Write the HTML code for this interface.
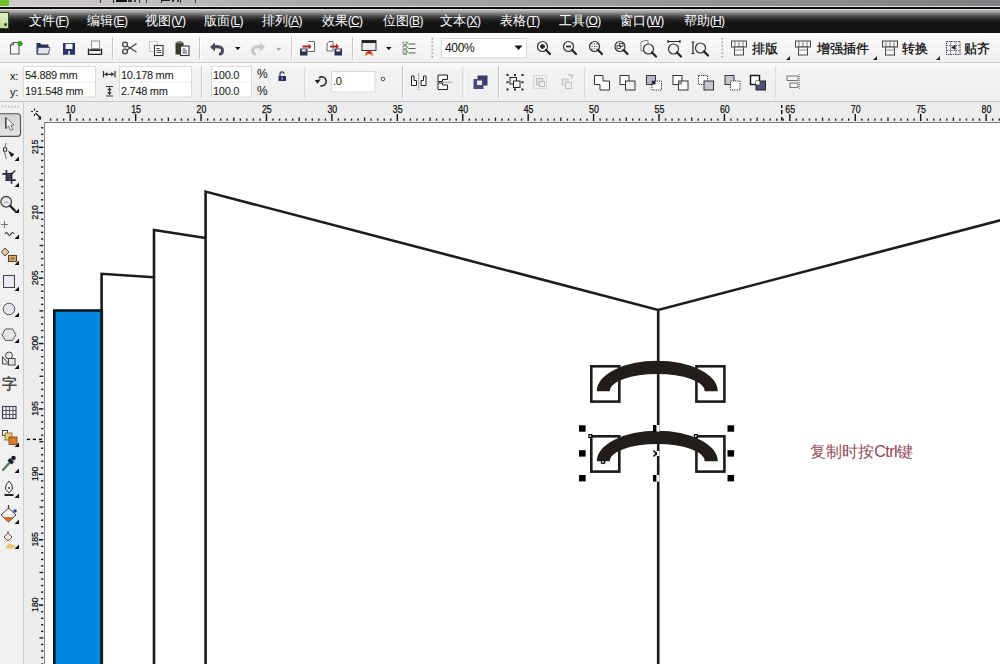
<!DOCTYPE html>
<html><head><meta charset="utf-8">
<style>
html,body{margin:0;padding:0;width:1000px;height:664px;overflow:hidden;background:#fff;}
body{position:relative;font-family:"Liberation Sans", sans-serif;}
.abs{position:absolute;}
#title{left:0;top:0;width:1000px;height:7px;background:linear-gradient(to right,#cecace 0px,#c6c2c6 120px,#aaa8aa 300px,#9c9a9c 600px,#8a8a8c 850px,#7e7e82 1000px);}
#menu{left:0;top:10px;width:1000px;height:23px;background:linear-gradient(#b6b8b8 0px,#a8a8a8 1.5px,#8a8a8a 3px,#5a5a5a 5.5px,#343434 8px,#1c1c1c 11px,#121212 15px,#141414 23px);}
.mi{position:absolute;top:3px;color:#fff;font-size:12.5px;line-height:16px;white-space:nowrap;font-weight:500;}
.mi span{letter-spacing:-0.7px;font-weight:normal;font-size:12px}
.mi u{text-decoration:underline;}
#tb{left:0;top:33px;width:1000px;height:29px;background:linear-gradient(#fbfbfb,#f0f0f0);border-bottom:1px solid #cfcfcf;}
#pb{left:0;top:63px;width:1000px;height:38px;background:linear-gradient(#fbfbfb 0px,#f2f2f2 9px,#efefef 38px);border-bottom:1px solid #c4c4c4;}
#rulerbg{left:0;top:102px;width:1000px;height:562px;background:#ededed;}
#toolbox{left:0;top:102px;width:23px;height:562px;background:#f1f1f1;border-right:1px solid #cdcdcd;}
#canvas{left:44px;top:122px;width:956px;height:542px;background:#fff;border-left:1px solid #858585;border-top:1px solid #7a7a7a;}
.sep{position:absolute;width:1px;background:#c9c9c9;border-right:1px solid #fff;}
.inp{position:absolute;background:#fff;border:1px solid #d6d6d6;font-size:11px;color:#111;}
.t11{position:absolute;font-size:11px;color:#111;white-space:nowrap;line-height:12px;letter-spacing:-0.3px;}
.cn{position:absolute;font-size:13px;color:#000;white-space:nowrap;line-height:14px;font-weight:500;-webkit-text-stroke:0.25px #000;}
svg{position:absolute;overflow:visible;}
</style></head><body>

<div class="abs" id="title"></div>
<div class="abs" style="left:0;top:6px;width:1000px;height:1px;background:#e6e6e6"></div>
<div class="abs" style="left:0;top:7px;width:1000px;height:2px;background:#0c0c0c"></div>
<div class="abs" style="left:0;top:9px;width:1000px;height:1px;background:#dcdcdc"></div>
<div class="abs" style="left:0;top:0;width:9px;height:6px;background:#6fbf2a"></div>
<div class="abs" style="left:99.5px;top:0;width:1px;height:2.5px;background:#333"></div>
<div class="abs" style="left:113px;top:0;width:1.3px;height:3px;background:#222"></div>
<div class="abs" style="left:116px;top:0;width:11px;height:2px;background:#111"></div>
<div class="abs" style="left:128px;top:0;width:4px;height:2px;background:#333"></div>
<div class="abs" style="left:134px;top:0;width:2px;height:2px;background:#444"></div>
<div class="abs" style="left:139px;top:0;width:1.3px;height:2.5px;background:#333"></div>
<div class="abs" style="left:145.5px;top:0;width:1px;height:2.5px;background:#444"></div>
<div class="abs" style="left:161px;top:0;width:1.3px;height:3px;background:#222"></div>
<div class="abs" style="left:162px;top:0;width:8px;height:1.2px;background:#222"></div>
<div class="abs" style="left:172px;top:0;width:2px;height:2px;background:#333"></div>
<div class="abs" style="left:177px;top:0;width:2px;height:2px;background:#444"></div>
<div class="abs" style="left:180px;top:0;width:1px;height:2.5px;background:#333"></div>
<div class="abs" style="left:194.5px;top:0;width:1px;height:2.5px;background:#444"></div>
<div class="abs" id="menu">
<div class="abs" style="left:0;top:2px;width:8px;height:15px;background:linear-gradient(#dff0c8,#c0dc98);border:1px solid #33501c;border-left:none"></div><div class="abs" style="left:4px;top:13px;width:3px;height:3px;border-radius:2px;background:#2a4a18"></div>
<div class="mi" style="left:29.3px">文件<span>(<u>F</u>)</span></div>
<div class="mi" style="left:87.3px">编辑<span>(<u>E</u>)</span></div>
<div class="mi" style="left:145.3px">视图<span>(<u>V</u>)</span></div>
<div class="mi" style="left:204.3px">版面<span>(<u>L</u>)</span></div>
<div class="mi" style="left:261.8px">排列<span>(<u>A</u>)</span></div>
<div class="mi" style="left:321.8px">效果<span>(<u>C</u>)</span></div>
<div class="mi" style="left:382.8px">位图<span>(<u>B</u>)</span></div>
<div class="mi" style="left:440.3px">文本<span>(<u>X</u>)</span></div>
<div class="mi" style="left:500.3px">表格<span>(<u>T</u>)</span></div>
<div class="mi" style="left:559.3px">工具<span>(<u>O</u>)</span></div>
<div class="mi" style="left:620.3px">窗口<span>(<u>W</u>)</span></div>
<div class="mi" style="left:683.8px">帮助<span>(<u>H</u>)</span></div>
</div>
<div class="abs" id="tb"></div>
<div class="abs" id="pb"></div>
<svg style="left:0;top:0" width="1000" height="664"><rect x="112" y="37" width="1" height="22" fill="#c6c6c6"/><rect x="113" y="37" width="1" height="22" fill="#ffffff"/>
<rect x="199" y="37" width="1" height="22" fill="#c6c6c6"/><rect x="200" y="37" width="1" height="22" fill="#ffffff"/>
<rect x="291" y="37" width="1" height="22" fill="#c6c6c6"/><rect x="292" y="37" width="1" height="22" fill="#ffffff"/>
<rect x="352" y="37" width="1" height="22" fill="#c6c6c6"/><rect x="353" y="37" width="1" height="22" fill="#ffffff"/>
<rect x="431.5" y="38.0" width="1.6" height="1.6" fill="#a8a8a8"/>
<rect x="431.5" y="41.6" width="1.6" height="1.6" fill="#a8a8a8"/>
<rect x="431.5" y="45.2" width="1.6" height="1.6" fill="#a8a8a8"/>
<rect x="431.5" y="48.8" width="1.6" height="1.6" fill="#a8a8a8"/>
<rect x="431.5" y="52.4" width="1.6" height="1.6" fill="#a8a8a8"/>
<rect x="431.5" y="56.0" width="1.6" height="1.6" fill="#a8a8a8"/>
<rect x="721.5" y="38.0" width="1.6" height="1.6" fill="#a8a8a8"/>
<rect x="721.5" y="41.6" width="1.6" height="1.6" fill="#a8a8a8"/>
<rect x="721.5" y="45.2" width="1.6" height="1.6" fill="#a8a8a8"/>
<rect x="721.5" y="48.8" width="1.6" height="1.6" fill="#a8a8a8"/>
<rect x="721.5" y="52.4" width="1.6" height="1.6" fill="#a8a8a8"/>
<rect x="721.5" y="56.0" width="1.6" height="1.6" fill="#a8a8a8"/>
<path d="M10.5,45 L13.5,42.5 L19,42.5 L19,54 L10.5,54 Z" fill="#f7f7f7" stroke="#5a5a5a" stroke-width="1.1"/>
<path d="M10.5,45 L13.5,45 L13.5,42.5" fill="none" stroke="#5a5a5a" stroke-width="0.9"/>
<circle cx="20" cy="43.5" r="2.6" fill="#3a9a2a"/>
<path d="M36.5,43 L40,43 L41.5,44.5 L48.5,44.5 L48.5,54.5 L36.5,54.5 Z" fill="#2b3158"/>
<path d="M38,47.5 L50,47.5 L48.5,54 L37.5,54 Z" fill="#e4e4ee" stroke="#3a3f60" stroke-width="0.8"/>
<rect x="63" y="43" width="12" height="11.8" fill="#2c3466"/>
<rect x="65.5" y="43.8" width="7" height="5.2" fill="#f2f2f6"/>
<rect x="68.3" y="51" width="1.6" height="3.8" fill="#e8e8f0"/>
<rect x="91.5" y="41" width="8" height="7.5" fill="#fafafa" stroke="#8a8a8a" stroke-width="0.9"/>
<path d="M88.5,48.5 L88.5,54.3 L101.5,54.3 L101.5,48.5" fill="none" stroke="#222" stroke-width="1.3"/>
<rect x="89.5" y="49.2" width="11" height="1.8" fill="#222"/>
<circle cx="125" cy="44.5" r="2.4" fill="none" stroke="#444" stroke-width="1.3"/>
<circle cx="125" cy="51.5" r="2.4" fill="none" stroke="#444" stroke-width="1.3"/>
<path d="M127,46 L136.5,52 M127,50 L136.5,43.5" stroke="#444" stroke-width="1.4"/>
<rect x="149.5" y="41.5" width="8" height="10" fill="#f8f8f8" stroke="#b8c8c0" stroke-width="0.9"/>
<rect x="154.5" y="45.5" width="8.5" height="10" fill="#fff" stroke="#333" stroke-width="1.1"/>
<path d="M156.5,48.5 h3 M156.5,50.5 h4.5 M156.5,52.5 h4.5" stroke="#333" stroke-width="0.9"/>
<rect x="175.5" y="42.5" width="8" height="12" fill="#3a3a2a" />
<rect x="177.5" y="41" width="4" height="2.5" fill="#777" />
<rect x="180.5" y="46" width="8.5" height="9.5" fill="#fff" stroke="#333" stroke-width="1.1"/>
<path d="M182.5,49 h3 M182.5,51 h4.5 M182.5,53 h4.5" stroke="#333" stroke-width="0.9"/>
<path d="M210,47 L215,42.5 L215,45 Q224.5,44.5 224,51 Q223.5,55.8 219,55.5 L219,53 Q221,52.6 221,50.5 Q221,47.8 215,48.5 L215,51.5 Z" fill="#4a4a58"/>
<path d="M235,47 h5.5 l-2.75,3 z" fill="#111"/>
<path d="M265,47 L260,42.5 L260,45 Q250.5,44.5 251,51 Q251.5,55.8 256,55.5 L256,53 Q254,52.6 254,50.5 Q254,47.8 260,48.5 L260,51.5 Z" fill="#c8c8c8"/>
<path d="M276,48 h5.5 l-2.75,3 z" fill="#aaa"/>
<rect x="300" y="48.5" width="7.5" height="7" fill="#2c3050"/><rect x="301.8" y="49.3" width="4" height="2.2" fill="#eee"/>
<path d="M308,41.5 L314.5,41.5 L314.5,51.5 L308,51.5" fill="#fff" stroke="#555" stroke-width="0.9"/>
<path d="M302.5,45.5 h6 v-2 l3,3 l-3,3 v-2 h-6 z" fill="#b02828"/>
<path d="M327,44 L329,41.5 L333,41.5 L333,51 L327,51 Z" fill="#fff" stroke="#555" stroke-width="0.9"/>
<rect x="334.5" y="48.5" width="7.5" height="7" fill="#2c3050"/><rect x="336.3" y="49.3" width="4" height="2.2" fill="#eee"/>
<path d="M330,45.5 h6 v-2 l3,3 l-3,3 v-2 h-6 z" fill="#b02828"/>
<rect x="362" y="40.5" width="14" height="10" fill="#eeeaf0" stroke="#333" stroke-width="1"/><rect x="362" y="40.5" width="14" height="2.5" fill="#222"/>
<path d="M364.5,56 L366,52 L369,50.5 L372,52 L373.5,56 L369,54 Z" fill="#e06a28"/><path d="M366.5,52.5 L369,51 L371.5,52.5 L369,53.5 Z" fill="#c02020"/>
<path d="M386,47 h5.5 l-2.75,3 z" fill="#111"/>
<path d="M403.5,43.5 l1.6,1.8 l3,-3.5" fill="none" stroke="#4a8a4a" stroke-width="1"/><rect x="403" y="42.0" width="3.5" height="3.5" fill="none" stroke="#777" stroke-width="0.6"/><path d="M408.5,44.0 h7" stroke="#555" stroke-width="1"/>
<path d="M403.5,48.0 l1.6,1.8 l3,-3.5" fill="none" stroke="#4a8a4a" stroke-width="1"/><rect x="403" y="46.5" width="3.5" height="3.5" fill="none" stroke="#777" stroke-width="0.6"/><path d="M408.5,48.5 h7" stroke="#555" stroke-width="1"/>
<path d="M403.5,52.5 l1.6,1.8 l3,-3.5" fill="none" stroke="#4a8a4a" stroke-width="1"/><rect x="403" y="51.0" width="3.5" height="3.5" fill="none" stroke="#777" stroke-width="0.6"/><path d="M408.5,53.0 h7" stroke="#555" stroke-width="1"/>
<rect x="441.5" y="38.5" width="85" height="19.5" fill="#fff" stroke="#d8d8d8" stroke-width="1"/>
<path d="M514.5,45.5 h8 l-4,4.5 z" fill="#111"/>
<circle cx="542.5" cy="46.5" r="5" fill="#f4f4f4" stroke="#333" stroke-width="1.2"/><path d="M546.0,50.0 L550.0,54.0" stroke="#222" stroke-width="2.2" stroke-linecap="round"/><path d="M540,46.5 h5 M542.5,44 v5" stroke="#111" stroke-width="1.8"/>
<circle cx="568.5" cy="46.5" r="5" fill="#f4f4f4" stroke="#333" stroke-width="1.2"/><path d="M572.0,50.0 L576.0,54.0" stroke="#222" stroke-width="2.2" stroke-linecap="round"/><path d="M566,46.5 h5" stroke="#333" stroke-width="1.8"/>
<circle cx="594.5" cy="46.5" r="5" fill="#f4f4f4" stroke="#333" stroke-width="1.2"/><path d="M598.0,50.0 L602.0,54.0" stroke="#222" stroke-width="2.2" stroke-linecap="round"/><rect x="591.5" y="43.5" width="1" height="1" fill="#333"/><rect x="591.5" y="46.0" width="1" height="1" fill="#333"/><rect x="591.5" y="48.5" width="1" height="1" fill="#333"/><rect x="594.0" y="43.5" width="1" height="1" fill="#333"/><rect x="594.0" y="46.0" width="1" height="1" fill="#333"/><rect x="594.0" y="48.5" width="1" height="1" fill="#333"/><rect x="596.5" y="43.5" width="1" height="1" fill="#333"/><rect x="596.5" y="46.0" width="1" height="1" fill="#333"/><rect x="596.5" y="48.5" width="1" height="1" fill="#333"/>
<circle cx="620" cy="46.5" r="5" fill="#f4f4f4" stroke="#333" stroke-width="1.2"/><path d="M623.5,50.0 L627.5,54.0" stroke="#222" stroke-width="2.2" stroke-linecap="round"/><rect x="617" y="45.5" width="3.5" height="3" fill="none" stroke="#333" stroke-width="0.8"/><rect x="619.5" y="43.5" width="3.5" height="3" fill="none" stroke="#333" stroke-width="0.8"/>
<path d="M641,42 L645,40.5 L648,40.5 L648,51 L641,51 Z" fill="#f6f6f6" stroke="#777" stroke-width="0.9"/>
<circle cx="648.5" cy="49" r="5" fill="#f4f4f4" stroke="#333" stroke-width="1.2"/><path d="M652.0,52.5 L656.0,56.5" stroke="#222" stroke-width="2.2" stroke-linecap="round"/>
<path d="M668,41.5 h12 M668,40 v3 M680,40 v3" stroke="#222" stroke-width="1.2"/>
<circle cx="673.5" cy="49" r="5" fill="#f4f4f4" stroke="#333" stroke-width="1.2"/><path d="M677.0,52.5 L681.0,56.5" stroke="#222" stroke-width="2.2" stroke-linecap="round"/>
<path d="M693,42 v11.5 M691.5,42 h3 M691.5,53.5 h3" stroke="#222" stroke-width="1.2"/>
<circle cx="700.5" cy="48" r="5" fill="#f4f4f4" stroke="#333" stroke-width="1.2"/><path d="M704.0,51.5 L708.0,55.5" stroke="#222" stroke-width="2.2" stroke-linecap="round"/>
<rect x="731.5" y="41" width="15" height="6" fill="#f4f4f4" stroke="#444" stroke-width="1"/><path d="M735,41.5 v5 M739,41.5 v5 M743,41.5 v5" stroke="#666" stroke-width="0.8"/><rect x="734.5" y="47" width="9" height="8" fill="#f8f8f8" stroke="#444" stroke-width="1"/><path d="M734.5,50 h9" stroke="#777" stroke-width="0.8"/>
<rect x="795.5" y="41" width="15" height="6" fill="#f4f4f4" stroke="#444" stroke-width="1"/><path d="M799,41.5 v5 M803,41.5 v5 M807,41.5 v5" stroke="#666" stroke-width="0.8"/><rect x="798.5" y="47" width="9" height="8" fill="#f8f8f8" stroke="#444" stroke-width="1"/><path d="M798.5,50 h9" stroke="#777" stroke-width="0.8"/>
<rect x="882.5" y="41" width="15" height="6" fill="#f4f4f4" stroke="#444" stroke-width="1"/><path d="M886,41.5 v5 M890,41.5 v5 M894,41.5 v5" stroke="#666" stroke-width="0.8"/><rect x="885.5" y="47" width="9" height="8" fill="#f8f8f8" stroke="#444" stroke-width="1"/><path d="M885.5,50 h9" stroke="#777" stroke-width="0.8"/>
<rect x="946.5" y="41.5" width="13.5" height="13" fill="#f4f4f8" stroke="#4a4a5a" stroke-width="1.1" stroke-dasharray="1.5,0.8"/>
<path d="M950.5,41 v14 M956,41 v14 M946.5,45.5 h14 M946.5,50.5 h14" stroke="#6a6a7a" stroke-width="0.9" stroke-dasharray="1.5,0.8"/>
<path d="M951,47.5 L955.5,45 L955.5,50 Z" fill="#222"/>
<path d="M786,60 L790,56 L790,60 Z" fill="#222"/>
<path d="M873,60 L877,56 L877,60 Z" fill="#222"/>
<path d="M936,60 L940,56 L940,60 Z" fill="#222"/></svg>
<div class="cn" style="left:752px;top:41.5px">排版</div>
<div class="cn" style="left:816.5px;top:41.5px">增强插件</div>
<div class="cn" style="left:902px;top:41.5px">转换</div>
<div class="cn" style="left:964px;top:41.5px">贴齐</div>
<div class="t11" style="left:445px;top:42px;font-size:12px">400%</div>
<svg style="left:0;top:0" width="1000" height="664"><rect x="201" y="66" width="1" height="32" fill="#c8c8c8"/><rect x="202" y="66" width="1" height="32" fill="#fbfbfb"/>
<rect x="304.5" y="66" width="1" height="32" fill="#c8c8c8"/><rect x="305.5" y="66" width="1" height="32" fill="#fbfbfb"/>
<rect x="402" y="66" width="1" height="32" fill="#c8c8c8"/><rect x="403" y="66" width="1" height="32" fill="#fbfbfb"/>
<rect x="462.5" y="66" width="1" height="32" fill="#c8c8c8"/><rect x="463.5" y="66" width="1" height="32" fill="#fbfbfb"/>
<rect x="498" y="66" width="1" height="32" fill="#c8c8c8"/><rect x="499" y="66" width="1" height="32" fill="#fbfbfb"/>
<rect x="584.5" y="66" width="1" height="32" fill="#c8c8c8"/><rect x="585.5" y="66" width="1" height="32" fill="#fbfbfb"/>
<rect x="775.5" y="66" width="1" height="32" fill="#c8c8c8"/><rect x="776.5" y="66" width="1" height="32" fill="#fbfbfb"/>
<rect x="23.5" y="66.5" width="72" height="30.5" fill="#fff" stroke="#dadada" stroke-width="1"/>
<rect x="24" y="81.5" width="71" height="1" fill="#ececec"/>
<rect x="119.5" y="66.5" width="72" height="30.5" fill="#fff" stroke="#dadada" stroke-width="1"/>
<rect x="120" y="81.5" width="71" height="1" fill="#ececec"/>
<rect x="211.5" y="66.5" width="40" height="30.5" fill="#fff" stroke="#dadada" stroke-width="1"/>
<rect x="212" y="81.5" width="39" height="1" fill="#ececec"/>
<rect x="331.5" y="71.5" width="43.5" height="20.5" fill="#fff" stroke="#dadada" stroke-width="1"/>
<path d="M103.5,71 v6.5 M115,71 v6.5 M104.5,74.3 h9.5" stroke="#333" stroke-width="1.2"/>
<path d="M104.5,74.3 l2.8,-2.3 v4.6 z M114,74.3 l-2.8,-2.3 v4.6 z" fill="#333"/>
<path d="M106,86.5 h7 M106,96 h7 M109.5,87.5 v7.5" stroke="#333" stroke-width="1.2"/>
<path d="M109.5,87.5 l-2.3,2.8 h4.6 z M109.5,95 l-2.3,-2.8 h4.6 z" fill="#333"/>
<path d="M280,76 v-2.2 a2,2 0 0 1 4,0" fill="none" stroke="#2c3060" stroke-width="1.2"/>
<rect x="278.5" y="76" width="7.5" height="5" fill="#2c3060"/><rect x="281.5" y="77.5" width="1.5" height="2" fill="#aab"/>
<path d="M319,77.8 A4.5,4.5 0 1 1 320.3,85.6" fill="none" stroke="#1a1a1a" stroke-width="1.5"/>
<path d="M314.8,80.3 L320.8,79.3 L317.6,83.8 Z" fill="#1a1a1a"/>
<circle cx="383" cy="79" r="1.8" fill="none" stroke="#444" stroke-width="0.9"/>
<path d="M411.5,76 v9.5 h5 v-5 h-2.5 v-4.5 z" fill="#fff" stroke="#222" stroke-width="1"/>
<path d="M426,76 v9.5 h-5 v-5 h2.5 v-4.5 z" fill="#fff" stroke="#222" stroke-width="1"/>
<path d="M418.7,73.5 v17" stroke="#444" stroke-width="0.8" stroke-dasharray="1.2,1"/>
<path d="M438,75 h9.5 v4.5 h-5 v2 h-4.5 z" fill="#fff" stroke="#222" stroke-width="1"/>
<path d="M438,89.5 h9.5 v-4.5 h-5 v-2 h-4.5 z" fill="#fff" stroke="#222" stroke-width="1"/>
<path d="M436.5,82.2 h16" stroke="#444" stroke-width="0.8" stroke-dasharray="1.2,1"/>
<rect x="477.5" y="75.5" width="10" height="10" fill="#3c3a6a"/>
<rect x="473.5" y="79" width="10" height="10" fill="#4a4878"/>
<rect x="477" y="80.5" width="5" height="4.5" fill="#e8e8f0"/>
<rect x="510" y="77.5" width="6.5" height="6.5" fill="none" stroke="#222" stroke-width="1"/><rect x="513.5" y="81" width="6.5" height="6.5" fill="#fff" stroke="#222" stroke-width="1"/>
<rect x="506.5" y="74" width="2" height="2" fill="#222"/>
<rect x="506.5" y="81.2" width="2" height="2" fill="#222"/>
<rect x="506.5" y="88.5" width="2" height="2" fill="#222"/>
<rect x="514" y="74" width="2" height="2" fill="#222"/>
<rect x="514" y="88.5" width="2" height="2" fill="#222"/>
<rect x="521.5" y="74" width="2" height="2" fill="#222"/>
<rect x="521.5" y="81.2" width="2" height="2" fill="#222"/>
<rect x="521.5" y="88.5" width="2" height="2" fill="#222"/>
<rect x="533.5" y="75.5" width="13" height="13" fill="#f0f0f0" stroke="#c8c8c8" stroke-width="1" stroke-dasharray="1.5,1"/>
<rect x="536.5" y="78.5" width="6" height="6" fill="#e4e4e4" stroke="#bbb" stroke-width="1"/><rect x="539.5" y="81.5" width="5" height="5" fill="#eee" stroke="#bbb" stroke-width="1"/>
<rect x="562" y="79" width="6" height="6" fill="#e4e4e4" stroke="#c4c4c4" stroke-width="1"/><rect x="565.5" y="82.5" width="6" height="6" fill="#eee" stroke="#c4c4c4" stroke-width="1"/>
<path d="M568,75 h4 v4" fill="none" stroke="#c8c8c8" stroke-width="1.5"/>
<path d="M594.5,75.5 h8.5 v5.5 h6.5 v9 h-9.5 v-5.5 h-5.5 z" fill="#fff" stroke="#333" stroke-width="1"/>
<rect x="620.0" y="75.5" width="9" height="9" fill="#fff" stroke="#333" stroke-width="1"/><rect x="625.5" y="81" width="9.5" height="9" fill="#eee" stroke="#333" stroke-width="1"/>
<rect x="646.5" y="75.5" width="9" height="9" fill="#b8b8c8" stroke="#333" stroke-width="1"/><rect x="652" y="81" width="9.5" height="9" fill="#fff" stroke="#333" stroke-width="1" stroke-dasharray="1.3,1"/><rect x="652" y="81" width="3.5" height="3.5" fill="#2a2a40"/>
<rect x="673.0" y="75.5" width="9" height="9" fill="#fff" stroke="#333" stroke-width="1"/><rect x="678.5" y="81" width="9.5" height="9" fill="#fff" stroke="#333" stroke-width="1"/><rect x="678.5" y="81" width="3.5" height="3.5" fill="#888"/>
<rect x="698.5" y="75.5" width="9" height="9" fill="#fff" stroke="#333" stroke-width="1" stroke-dasharray="1.3,1"/><rect x="704" y="81" width="9.5" height="9" fill="#c8c8d0" stroke="#333" stroke-width="1"/>
<rect x="725.0" y="75.5" width="9" height="9" fill="#c8c8d0" stroke="#333" stroke-width="1"/><rect x="730.5" y="81" width="9.5" height="9" fill="#fff" stroke="#333" stroke-width="1" stroke-dasharray="1.3,1"/>
<rect x="750.5" y="75.5" width="9" height="9" fill="#fff" stroke="#111" stroke-width="1.4"/><rect x="756" y="81" width="9.5" height="9" fill="#505070" stroke="#222" stroke-width="1"/><rect x="756" y="81" width="3.5" height="3.5" fill="#fff"/>
<rect x="787" y="76" width="11" height="4.5" fill="#f4f4f4" stroke="#666" stroke-width="0.9"/><rect x="790" y="83" width="8" height="4.5" fill="#f4f4f4" stroke="#666" stroke-width="0.9"/>
<path d="M799.5,74 v16" stroke="#666" stroke-width="0.8" stroke-dasharray="1,1"/></svg>
<div class="t11" style="left:10px;top:70px">x:</div>
<div class="t11" style="left:10px;top:86px">y:</div>
<div class="t11" style="left:25px;top:69px">54.889 mm</div>
<div class="t11" style="left:25px;top:85px">191.548 mm</div>
<div class="t11" style="left:121px;top:69px">10.178 mm</div>
<div class="t11" style="left:121px;top:85px">2.748 mm</div>
<div class="t11" style="left:213px;top:69px">100.0</div>
<div class="t11" style="left:213px;top:85px">100.0</div>
<div class="t11" style="left:257px;top:68px;font-size:12px">%</div>
<div class="t11" style="left:257px;top:85px;font-size:12px">%</div>
<div class="t11" style="left:333px;top:75px">.0</div>
<div class="abs" id="rulerbg"></div>
<div class="abs" id="toolbox"></div>
<div class="abs" id="canvas"></div>
<svg style="left:0;top:0" width="1000" height="664"><rect x="1.5" y="105.8" width="1.6" height="1.6" fill="#b8b8b8"/>
<rect x="4.7" y="105.8" width="1.6" height="1.6" fill="#b8b8b8"/>
<rect x="7.9" y="105.8" width="1.6" height="1.6" fill="#b8b8b8"/>
<rect x="11.1" y="105.8" width="1.6" height="1.6" fill="#b8b8b8"/>
<rect x="14.3" y="105.8" width="1.6" height="1.6" fill="#b8b8b8"/>
<rect x="17.5" y="105.8" width="1.6" height="1.6" fill="#b8b8b8"/>
<defs><linearGradient id="pk" x1="0" y1="0" x2="0" y2="1"><stop offset="0" stop-color="#d4d4d8"/><stop offset="0.5" stop-color="#dcdcdf"/><stop offset="1" stop-color="#e4e4e6"/></linearGradient></defs>
<rect x="-3" y="113.8" width="23.5" height="22.6" rx="3" fill="url(#pk)" stroke="#4e4e4e" stroke-width="1.1"/>
<path d="M5.8,117.5 L5.8,128.5 L8.5,126 L10.5,130.5 L12.8,129.5 L10.8,125.2 L14,125 Z" fill="#f6f6f8" stroke="#6a6a6a" stroke-width="0.9" stroke-linejoin="round"/>
<path d="M5.8,117.5 L5.8,128.5" stroke="#333" stroke-width="1.2"/>
<path d="M6.2,143 Q3.8,150 5,154 Q5.6,157 6.5,159" fill="none" stroke="#777" stroke-width="1.1"/>
<rect x="3.5" y="148" width="3.2" height="3" fill="#fff" stroke="#333" stroke-width="1"/>
<path d="M8,150.8 L14.3,154.3 L11.3,157.2 Z" fill="#151525"/>
<path d="M14.5,161 L19,156.5 L19,161 Z" fill="#111"/>
<path d="M2.3,173.8 h9.5 M6.4,170 v10.2 h9.4 M11.6,172.5 v11.2" stroke="#2a2a3a" stroke-width="1.7" fill="none"/>
<path d="M7.5,177.8 L15.4,170.5" stroke="#2a2a3a" stroke-width="1.2"/>
<rect x="7" y="174.5" width="4" height="5" fill="#3a3a4a"/>
<path d="M14.5,187 L19,182.5 L19,187 Z" fill="#111"/>
<circle cx="6.2" cy="201.8" r="5.3" fill="#ebebf2" stroke="#444" stroke-width="1.3"/>
<path d="M4,203.5 q2,-2.5 4.5,-1" fill="none" stroke="#a8a8c0" stroke-width="1.2"/>
<path d="M10.3,206 L15,210.8" stroke="#1a1a1a" stroke-width="2.3" stroke-linecap="round"/>
<path d="M14.5,213 L19,208.5 L19,213 Z" fill="#111"/>
<path d="M1,224.5 h7 M4.5,221 v7" stroke="#666" stroke-width="0.9"/>
<path d="M5,234 q1.5,-3 3,0 t3,0 t3,0" fill="none" stroke="#333" stroke-width="1.2"/>
<path d="M14.5,239 L19,234.5 L19,239 Z" fill="#111"/>
<path d="M1.5,252 L5,248 L9,252 L5,256 Z" fill="#e8c8a0" stroke="#5a4a3a" stroke-width="1"/>
<rect x="8.5" y="255.5" width="8" height="6" fill="#d8b078" stroke="#5a4020" stroke-width="1.1"/>
<rect x="10.5" y="257.5" width="4" height="2" fill="#8a6a40"/>
<path d="M14.5,265 L19,260.5 L19,265 Z" fill="#111"/>
<rect x="3.5" y="275.5" width="11" height="12" fill="#ebebf3" stroke="#444" stroke-width="1"/>
<path d="M14.5,291 L19,286.5 L19,291 Z" fill="#111"/>
<circle cx="9" cy="309" r="5.8" fill="#e6e6ea" stroke="#555" stroke-width="1"/>
<path d="M14.5,317 L19,312.5 L19,317 Z" fill="#111"/>
<path d="M5.5,329 h7 l3.5,5.7 l-3.5,5.7 h-7 l-3.5,-5.7 z" fill="#e6e6ea" stroke="#555" stroke-width="1"/>
<path d="M14.5,343 L19,338.5 L19,343 Z" fill="#111"/>
<circle cx="9" cy="355.5" r="3.5" fill="#e6e6ea" stroke="#444" stroke-width="1"/>
<path d="M2.5,356.5 L9,364 L2.5,364 Z" fill="#e6e6ea" stroke="#444" stroke-width="1"/>
<rect x="8.5" y="358.5" width="6.5" height="6.5" fill="#e6e6ea" stroke="#444" stroke-width="1"/>
<path d="M14.5,369 L19,364.5 L19,369 Z" fill="#111"/>
<rect x="2.5" y="406.5" width="13.5" height="12" fill="#eeeef6" stroke="#3a3a4a" stroke-width="1.1"/>
<path d="M2.5,410.5 h13.5 M2.5,414.5 h13.5 M6,406.5 v12 M9.5,406.5 v12 M13,406.5 v12" stroke="#4a4a5a" stroke-width="0.9"/>
<rect x="2.5" y="430.5" width="5" height="5" fill="#fff" stroke="#333" stroke-width="0.9"/>
<rect x="5" y="433" width="7" height="7" fill="#e8c880" stroke="#8a6a30" stroke-width="0.9"/>
<rect x="9" y="437" width="8" height="7.5" fill="#d87828" stroke="#8a4a10" stroke-width="0.9"/>
<path d="M14.5,447 L19,442.5 L19,447 Z" fill="#111"/>
<path d="M3,470 L11,461" stroke="#4a7a60" stroke-width="2.2" stroke-linecap="round"/>
<path d="M10,458 L14,462 L11.5,464.5 L7.5,460.5 Z" fill="#1a1a2a"/>
<circle cx="13.5" cy="458" r="2.3" fill="#1a1a2a"/>
<path d="M14.5,473 L19,468.5 L19,473 Z" fill="#111"/>
<path d="M9,481 L12,485 L12.5,489 L9,493 L5.5,489 L6,485 Z" fill="#f2f2f6" stroke="#333" stroke-width="1"/>
<circle cx="9" cy="488" r="1" fill="#333"/>
<rect x="4.5" y="494" width="9" height="2" fill="#222"/>
<path d="M14.5,498 L19,493.5 L19,498 Z" fill="#111"/>
<path d="M1,515 L8.5,508 L16,515 L8.5,522 Z" fill="#f4f4f4" stroke="#444" stroke-width="1"/>
<path d="M3,517 L14,517 L8.5,522 Z" fill="#c87028"/>
<path d="M8.5,505 v4" stroke="#333" stroke-width="1.2"/>
<circle cx="15" cy="511" r="1.8" fill="#334488"/>
<path d="M14.5,524 L19,519.5 L19,524 Z" fill="#111"/>
<path d="M4,537 L8,533 L12,537 L8,541 Z" fill="#f0e8e0" stroke="#6a5040" stroke-width="1"/>
<path d="M8,531 v3" stroke="#6a5040" stroke-width="1"/>
<path d="M5,548 L9,543 L16,546 L12,549 Z" fill="#e8c870"/>
<path d="M14.5,549 L19,544.5 L19,549 Z" fill="#111"/>
<path d="M31,111.5 h2 M36,111.5 h2 M34.5,108.5 v2 M34.5,114 v2 M38.8,116.8 L41,119" stroke="#111" stroke-width="1.1"/>
<path d="M35.5,113 L40.5,118" stroke="#111" stroke-width="1.1"/>
<path d="M41,119.5 L41,116 L37.5,119.5 Z" fill="#111"/></svg>
<div class="abs" style="left:1.5px;top:376px;font-size:15px;line-height:16px;color:#4a4a4a;font-weight:bold">字</div>
<svg style="left:0;top:0" width="1000" height="664" font-family="Liberation Sans, sans-serif">
<rect x="49.90" y="118.5" width="1.4" height="2.2" fill="#222"/>
<rect x="56.44" y="118.5" width="1.4" height="2.2" fill="#222"/>
<rect x="62.98" y="118.5" width="1.4" height="2.2" fill="#222"/>
<rect x="69.53" y="114" width="1.4" height="7" fill="#111"/>
<text x="70.62" y="113.2" font-size="10" text-anchor="middle" textLength="9.8" lengthAdjust="spacingAndGlyphs" fill="#111" font-weight="normal" stroke="#111" stroke-width="0.25">10</text>
<rect x="76.07" y="118.5" width="1.4" height="2.2" fill="#222"/>
<rect x="82.61" y="118.5" width="1.4" height="2.2" fill="#222"/>
<rect x="89.15" y="118.5" width="1.4" height="2.2" fill="#222"/>
<rect x="95.69" y="118.5" width="1.4" height="2.2" fill="#222"/>
<rect x="102.23" y="117.5" width="1.4" height="3.5" fill="#222"/>
<rect x="108.78" y="118.5" width="1.4" height="2.2" fill="#222"/>
<rect x="115.32" y="118.5" width="1.4" height="2.2" fill="#222"/>
<rect x="121.86" y="118.5" width="1.4" height="2.2" fill="#222"/>
<rect x="128.40" y="118.5" width="1.4" height="2.2" fill="#222"/>
<rect x="134.94" y="114" width="1.4" height="7" fill="#111"/>
<text x="136.04" y="113.2" font-size="10" text-anchor="middle" textLength="9.8" lengthAdjust="spacingAndGlyphs" fill="#111" font-weight="normal" stroke="#111" stroke-width="0.25">15</text>
<rect x="141.49" y="118.5" width="1.4" height="2.2" fill="#222"/>
<rect x="148.03" y="118.5" width="1.4" height="2.2" fill="#222"/>
<rect x="154.57" y="118.5" width="1.4" height="2.2" fill="#222"/>
<rect x="161.11" y="118.5" width="1.4" height="2.2" fill="#222"/>
<rect x="167.65" y="117.5" width="1.4" height="3.5" fill="#222"/>
<rect x="174.20" y="118.5" width="1.4" height="2.2" fill="#222"/>
<rect x="180.74" y="118.5" width="1.4" height="2.2" fill="#222"/>
<rect x="187.28" y="118.5" width="1.4" height="2.2" fill="#222"/>
<rect x="193.82" y="118.5" width="1.4" height="2.2" fill="#222"/>
<rect x="200.36" y="114" width="1.4" height="7" fill="#111"/>
<text x="201.46" y="113.2" font-size="10" text-anchor="middle" textLength="9.8" lengthAdjust="spacingAndGlyphs" fill="#111" font-weight="normal" stroke="#111" stroke-width="0.25">20</text>
<rect x="206.90" y="118.5" width="1.4" height="2.2" fill="#222"/>
<rect x="213.45" y="118.5" width="1.4" height="2.2" fill="#222"/>
<rect x="219.99" y="118.5" width="1.4" height="2.2" fill="#222"/>
<rect x="226.53" y="118.5" width="1.4" height="2.2" fill="#222"/>
<rect x="233.07" y="117.5" width="1.4" height="3.5" fill="#222"/>
<rect x="239.61" y="118.5" width="1.4" height="2.2" fill="#222"/>
<rect x="246.16" y="118.5" width="1.4" height="2.2" fill="#222"/>
<rect x="252.70" y="118.5" width="1.4" height="2.2" fill="#222"/>
<rect x="259.24" y="118.5" width="1.4" height="2.2" fill="#222"/>
<rect x="265.78" y="114" width="1.4" height="7" fill="#111"/>
<text x="266.88" y="113.2" font-size="10" text-anchor="middle" textLength="9.8" lengthAdjust="spacingAndGlyphs" fill="#111" font-weight="normal" stroke="#111" stroke-width="0.25">25</text>
<rect x="272.32" y="118.5" width="1.4" height="2.2" fill="#222"/>
<rect x="278.87" y="118.5" width="1.4" height="2.2" fill="#222"/>
<rect x="285.41" y="118.5" width="1.4" height="2.2" fill="#222"/>
<rect x="291.95" y="118.5" width="1.4" height="2.2" fill="#222"/>
<rect x="298.49" y="117.5" width="1.4" height="3.5" fill="#222"/>
<rect x="305.03" y="118.5" width="1.4" height="2.2" fill="#222"/>
<rect x="311.58" y="118.5" width="1.4" height="2.2" fill="#222"/>
<rect x="318.12" y="118.5" width="1.4" height="2.2" fill="#222"/>
<rect x="324.66" y="118.5" width="1.4" height="2.2" fill="#222"/>
<rect x="331.20" y="114" width="1.4" height="7" fill="#111"/>
<text x="332.30" y="113.2" font-size="10" text-anchor="middle" textLength="9.8" lengthAdjust="spacingAndGlyphs" fill="#111" font-weight="normal" stroke="#111" stroke-width="0.25">30</text>
<rect x="337.74" y="118.5" width="1.4" height="2.2" fill="#222"/>
<rect x="344.28" y="118.5" width="1.4" height="2.2" fill="#222"/>
<rect x="350.83" y="118.5" width="1.4" height="2.2" fill="#222"/>
<rect x="357.37" y="118.5" width="1.4" height="2.2" fill="#222"/>
<rect x="363.91" y="117.5" width="1.4" height="3.5" fill="#222"/>
<rect x="370.45" y="118.5" width="1.4" height="2.2" fill="#222"/>
<rect x="376.99" y="118.5" width="1.4" height="2.2" fill="#222"/>
<rect x="383.54" y="118.5" width="1.4" height="2.2" fill="#222"/>
<rect x="390.08" y="118.5" width="1.4" height="2.2" fill="#222"/>
<rect x="396.62" y="114" width="1.4" height="7" fill="#111"/>
<text x="397.72" y="113.2" font-size="10" text-anchor="middle" textLength="9.8" lengthAdjust="spacingAndGlyphs" fill="#111" font-weight="normal" stroke="#111" stroke-width="0.25">35</text>
<rect x="403.16" y="118.5" width="1.4" height="2.2" fill="#222"/>
<rect x="409.70" y="118.5" width="1.4" height="2.2" fill="#222"/>
<rect x="416.25" y="118.5" width="1.4" height="2.2" fill="#222"/>
<rect x="422.79" y="118.5" width="1.4" height="2.2" fill="#222"/>
<rect x="429.33" y="117.5" width="1.4" height="3.5" fill="#222"/>
<rect x="435.87" y="118.5" width="1.4" height="2.2" fill="#222"/>
<rect x="442.41" y="118.5" width="1.4" height="2.2" fill="#222"/>
<rect x="448.96" y="118.5" width="1.4" height="2.2" fill="#222"/>
<rect x="455.50" y="118.5" width="1.4" height="2.2" fill="#222"/>
<rect x="462.04" y="114" width="1.4" height="7" fill="#111"/>
<text x="463.14" y="113.2" font-size="10" text-anchor="middle" textLength="9.8" lengthAdjust="spacingAndGlyphs" fill="#111" font-weight="normal" stroke="#111" stroke-width="0.25">40</text>
<rect x="468.58" y="118.5" width="1.4" height="2.2" fill="#222"/>
<rect x="475.12" y="118.5" width="1.4" height="2.2" fill="#222"/>
<rect x="481.66" y="118.5" width="1.4" height="2.2" fill="#222"/>
<rect x="488.21" y="118.5" width="1.4" height="2.2" fill="#222"/>
<rect x="494.75" y="117.5" width="1.4" height="3.5" fill="#222"/>
<rect x="501.29" y="118.5" width="1.4" height="2.2" fill="#222"/>
<rect x="507.83" y="118.5" width="1.4" height="2.2" fill="#222"/>
<rect x="514.37" y="118.5" width="1.4" height="2.2" fill="#222"/>
<rect x="520.92" y="118.5" width="1.4" height="2.2" fill="#222"/>
<rect x="527.46" y="114" width="1.4" height="7" fill="#111"/>
<text x="528.56" y="113.2" font-size="10" text-anchor="middle" textLength="9.8" lengthAdjust="spacingAndGlyphs" fill="#111" font-weight="normal" stroke="#111" stroke-width="0.25">45</text>
<rect x="534.00" y="118.5" width="1.4" height="2.2" fill="#222"/>
<rect x="540.54" y="118.5" width="1.4" height="2.2" fill="#222"/>
<rect x="547.08" y="118.5" width="1.4" height="2.2" fill="#222"/>
<rect x="553.63" y="118.5" width="1.4" height="2.2" fill="#222"/>
<rect x="560.17" y="117.5" width="1.4" height="3.5" fill="#222"/>
<rect x="566.71" y="118.5" width="1.4" height="2.2" fill="#222"/>
<rect x="573.25" y="118.5" width="1.4" height="2.2" fill="#222"/>
<rect x="579.79" y="118.5" width="1.4" height="2.2" fill="#222"/>
<rect x="586.34" y="118.5" width="1.4" height="2.2" fill="#222"/>
<rect x="592.88" y="114" width="1.4" height="7" fill="#111"/>
<text x="593.98" y="113.2" font-size="10" text-anchor="middle" textLength="9.8" lengthAdjust="spacingAndGlyphs" fill="#111" font-weight="normal" stroke="#111" stroke-width="0.25">50</text>
<rect x="599.42" y="118.5" width="1.4" height="2.2" fill="#222"/>
<rect x="605.96" y="118.5" width="1.4" height="2.2" fill="#222"/>
<rect x="612.50" y="118.5" width="1.4" height="2.2" fill="#222"/>
<rect x="619.04" y="118.5" width="1.4" height="2.2" fill="#222"/>
<rect x="625.59" y="117.5" width="1.4" height="3.5" fill="#222"/>
<rect x="632.13" y="118.5" width="1.4" height="2.2" fill="#222"/>
<rect x="638.67" y="118.5" width="1.4" height="2.2" fill="#222"/>
<rect x="645.21" y="118.5" width="1.4" height="2.2" fill="#222"/>
<rect x="651.75" y="118.5" width="1.4" height="2.2" fill="#222"/>
<rect x="658.30" y="114" width="1.4" height="7" fill="#111"/>
<text x="659.40" y="113.2" font-size="10" text-anchor="middle" textLength="9.8" lengthAdjust="spacingAndGlyphs" fill="#111" font-weight="normal" stroke="#111" stroke-width="0.25">55</text>
<rect x="664.84" y="118.5" width="1.4" height="2.2" fill="#222"/>
<rect x="671.38" y="118.5" width="1.4" height="2.2" fill="#222"/>
<rect x="677.92" y="118.5" width="1.4" height="2.2" fill="#222"/>
<rect x="684.46" y="118.5" width="1.4" height="2.2" fill="#222"/>
<rect x="691.01" y="117.5" width="1.4" height="3.5" fill="#222"/>
<rect x="697.55" y="118.5" width="1.4" height="2.2" fill="#222"/>
<rect x="704.09" y="118.5" width="1.4" height="2.2" fill="#222"/>
<rect x="710.63" y="118.5" width="1.4" height="2.2" fill="#222"/>
<rect x="717.17" y="118.5" width="1.4" height="2.2" fill="#222"/>
<rect x="723.72" y="114" width="1.4" height="7" fill="#111"/>
<text x="724.82" y="113.2" font-size="10" text-anchor="middle" textLength="9.8" lengthAdjust="spacingAndGlyphs" fill="#111" font-weight="normal" stroke="#111" stroke-width="0.25">60</text>
<rect x="730.26" y="118.5" width="1.4" height="2.2" fill="#222"/>
<rect x="736.80" y="118.5" width="1.4" height="2.2" fill="#222"/>
<rect x="743.34" y="118.5" width="1.4" height="2.2" fill="#222"/>
<rect x="749.88" y="118.5" width="1.4" height="2.2" fill="#222"/>
<rect x="756.42" y="117.5" width="1.4" height="3.5" fill="#222"/>
<rect x="762.97" y="118.5" width="1.4" height="2.2" fill="#222"/>
<rect x="769.51" y="118.5" width="1.4" height="2.2" fill="#222"/>
<rect x="776.05" y="118.5" width="1.4" height="2.2" fill="#222"/>
<rect x="782.59" y="118.5" width="1.4" height="2.2" fill="#222"/>
<rect x="789.13" y="114" width="1.4" height="7" fill="#111"/>
<text x="790.23" y="113.2" font-size="10" text-anchor="middle" textLength="9.8" lengthAdjust="spacingAndGlyphs" fill="#111" font-weight="normal" stroke="#111" stroke-width="0.25">65</text>
<rect x="795.68" y="118.5" width="1.4" height="2.2" fill="#222"/>
<rect x="802.22" y="118.5" width="1.4" height="2.2" fill="#222"/>
<rect x="808.76" y="118.5" width="1.4" height="2.2" fill="#222"/>
<rect x="815.30" y="118.5" width="1.4" height="2.2" fill="#222"/>
<rect x="821.84" y="117.5" width="1.4" height="3.5" fill="#222"/>
<rect x="828.39" y="118.5" width="1.4" height="2.2" fill="#222"/>
<rect x="834.93" y="118.5" width="1.4" height="2.2" fill="#222"/>
<rect x="841.47" y="118.5" width="1.4" height="2.2" fill="#222"/>
<rect x="848.01" y="118.5" width="1.4" height="2.2" fill="#222"/>
<rect x="854.55" y="114" width="1.4" height="7" fill="#111"/>
<text x="855.65" y="113.2" font-size="10" text-anchor="middle" textLength="9.8" lengthAdjust="spacingAndGlyphs" fill="#111" font-weight="normal" stroke="#111" stroke-width="0.25">70</text>
<rect x="861.09" y="118.5" width="1.4" height="2.2" fill="#222"/>
<rect x="867.64" y="118.5" width="1.4" height="2.2" fill="#222"/>
<rect x="874.18" y="118.5" width="1.4" height="2.2" fill="#222"/>
<rect x="880.72" y="118.5" width="1.4" height="2.2" fill="#222"/>
<rect x="887.26" y="117.5" width="1.4" height="3.5" fill="#222"/>
<rect x="893.80" y="118.5" width="1.4" height="2.2" fill="#222"/>
<rect x="900.35" y="118.5" width="1.4" height="2.2" fill="#222"/>
<rect x="906.89" y="118.5" width="1.4" height="2.2" fill="#222"/>
<rect x="913.43" y="118.5" width="1.4" height="2.2" fill="#222"/>
<rect x="919.97" y="114" width="1.4" height="7" fill="#111"/>
<text x="921.07" y="113.2" font-size="10" text-anchor="middle" textLength="9.8" lengthAdjust="spacingAndGlyphs" fill="#111" font-weight="normal" stroke="#111" stroke-width="0.25">75</text>
<rect x="926.51" y="118.5" width="1.4" height="2.2" fill="#222"/>
<rect x="933.06" y="118.5" width="1.4" height="2.2" fill="#222"/>
<rect x="939.60" y="118.5" width="1.4" height="2.2" fill="#222"/>
<rect x="946.14" y="118.5" width="1.4" height="2.2" fill="#222"/>
<rect x="952.68" y="117.5" width="1.4" height="3.5" fill="#222"/>
<rect x="959.22" y="118.5" width="1.4" height="2.2" fill="#222"/>
<rect x="965.77" y="118.5" width="1.4" height="2.2" fill="#222"/>
<rect x="972.31" y="118.5" width="1.4" height="2.2" fill="#222"/>
<rect x="978.85" y="118.5" width="1.4" height="2.2" fill="#222"/>
<rect x="985.39" y="114" width="1.4" height="7" fill="#111"/>
<text x="986.49" y="113.2" font-size="10" text-anchor="middle" textLength="9.8" lengthAdjust="spacingAndGlyphs" fill="#111" font-weight="normal" stroke="#111" stroke-width="0.25">80</text>
<rect x="991.93" y="118.5" width="1.4" height="2.2" fill="#222"/>
<rect x="998.47" y="118.5" width="1.4" height="2.2" fill="#222"/>
<rect x="41" y="127.08" width="2.3" height="1.4" fill="#222"/>
<rect x="41" y="133.62" width="2.3" height="1.4" fill="#222"/>
<rect x="41" y="140.16" width="2.3" height="1.4" fill="#222"/>
<rect x="39" y="146.60" width="4.3" height="1.5" fill="#111"/>
<text transform="translate(38,146.90) rotate(-90)" font-size="9.4" text-anchor="middle" textLength="14.4" lengthAdjust="spacingAndGlyphs" fill="#111" font-weight="normal" stroke="#111" stroke-width="0.25">215</text>
<rect x="41" y="153.24" width="2.3" height="1.4" fill="#222"/>
<rect x="41" y="159.78" width="2.3" height="1.4" fill="#222"/>
<rect x="41" y="166.32" width="2.3" height="1.4" fill="#222"/>
<rect x="41" y="172.86" width="2.3" height="1.4" fill="#222"/>
<rect x="39.5" y="179.40" width="3.8" height="1.4" fill="#222"/>
<rect x="41" y="185.94" width="2.3" height="1.4" fill="#222"/>
<rect x="41" y="192.48" width="2.3" height="1.4" fill="#222"/>
<rect x="41" y="199.02" width="2.3" height="1.4" fill="#222"/>
<rect x="41" y="205.56" width="2.3" height="1.4" fill="#222"/>
<rect x="39" y="212.00" width="4.3" height="1.5" fill="#111"/>
<text transform="translate(38,212.30) rotate(-90)" font-size="9.4" text-anchor="middle" textLength="14.4" lengthAdjust="spacingAndGlyphs" fill="#111" font-weight="normal" stroke="#111" stroke-width="0.25">210</text>
<rect x="41" y="218.64" width="2.3" height="1.4" fill="#222"/>
<rect x="41" y="225.18" width="2.3" height="1.4" fill="#222"/>
<rect x="41" y="231.72" width="2.3" height="1.4" fill="#222"/>
<rect x="41" y="238.26" width="2.3" height="1.4" fill="#222"/>
<rect x="39.5" y="244.80" width="3.8" height="1.4" fill="#222"/>
<rect x="41" y="251.34" width="2.3" height="1.4" fill="#222"/>
<rect x="41" y="257.88" width="2.3" height="1.4" fill="#222"/>
<rect x="41" y="264.42" width="2.3" height="1.4" fill="#222"/>
<rect x="41" y="270.96" width="2.3" height="1.4" fill="#222"/>
<rect x="39" y="277.40" width="4.3" height="1.5" fill="#111"/>
<text transform="translate(38,277.70) rotate(-90)" font-size="9.4" text-anchor="middle" textLength="14.4" lengthAdjust="spacingAndGlyphs" fill="#111" font-weight="normal" stroke="#111" stroke-width="0.25">205</text>
<rect x="41" y="284.04" width="2.3" height="1.4" fill="#222"/>
<rect x="41" y="290.58" width="2.3" height="1.4" fill="#222"/>
<rect x="41" y="297.12" width="2.3" height="1.4" fill="#222"/>
<rect x="41" y="303.66" width="2.3" height="1.4" fill="#222"/>
<rect x="39.5" y="310.20" width="3.8" height="1.4" fill="#222"/>
<rect x="41" y="316.74" width="2.3" height="1.4" fill="#222"/>
<rect x="41" y="323.28" width="2.3" height="1.4" fill="#222"/>
<rect x="41" y="329.82" width="2.3" height="1.4" fill="#222"/>
<rect x="41" y="336.36" width="2.3" height="1.4" fill="#222"/>
<rect x="39" y="342.80" width="4.3" height="1.5" fill="#111"/>
<text transform="translate(38,343.10) rotate(-90)" font-size="9.4" text-anchor="middle" textLength="14.4" lengthAdjust="spacingAndGlyphs" fill="#111" font-weight="normal" stroke="#111" stroke-width="0.25">200</text>
<rect x="41" y="349.44" width="2.3" height="1.4" fill="#222"/>
<rect x="41" y="355.98" width="2.3" height="1.4" fill="#222"/>
<rect x="41" y="362.52" width="2.3" height="1.4" fill="#222"/>
<rect x="41" y="369.06" width="2.3" height="1.4" fill="#222"/>
<rect x="39.5" y="375.60" width="3.8" height="1.4" fill="#222"/>
<rect x="41" y="382.14" width="2.3" height="1.4" fill="#222"/>
<rect x="41" y="388.68" width="2.3" height="1.4" fill="#222"/>
<rect x="41" y="395.22" width="2.3" height="1.4" fill="#222"/>
<rect x="41" y="401.76" width="2.3" height="1.4" fill="#222"/>
<rect x="39" y="408.20" width="4.3" height="1.5" fill="#111"/>
<text transform="translate(38,408.50) rotate(-90)" font-size="9.4" text-anchor="middle" textLength="14.4" lengthAdjust="spacingAndGlyphs" fill="#111" font-weight="normal" stroke="#111" stroke-width="0.25">195</text>
<rect x="41" y="414.84" width="2.3" height="1.4" fill="#222"/>
<rect x="41" y="421.38" width="2.3" height="1.4" fill="#222"/>
<rect x="41" y="427.92" width="2.3" height="1.4" fill="#222"/>
<rect x="41" y="434.46" width="2.3" height="1.4" fill="#222"/>
<rect x="39.5" y="441.00" width="3.8" height="1.4" fill="#222"/>
<rect x="41" y="447.54" width="2.3" height="1.4" fill="#222"/>
<rect x="41" y="454.08" width="2.3" height="1.4" fill="#222"/>
<rect x="41" y="460.62" width="2.3" height="1.4" fill="#222"/>
<rect x="41" y="467.16" width="2.3" height="1.4" fill="#222"/>
<rect x="39" y="473.60" width="4.3" height="1.5" fill="#111"/>
<text transform="translate(38,473.90) rotate(-90)" font-size="9.4" text-anchor="middle" textLength="14.4" lengthAdjust="spacingAndGlyphs" fill="#111" font-weight="normal" stroke="#111" stroke-width="0.25">190</text>
<rect x="41" y="480.24" width="2.3" height="1.4" fill="#222"/>
<rect x="41" y="486.78" width="2.3" height="1.4" fill="#222"/>
<rect x="41" y="493.32" width="2.3" height="1.4" fill="#222"/>
<rect x="41" y="499.86" width="2.3" height="1.4" fill="#222"/>
<rect x="39.5" y="506.40" width="3.8" height="1.4" fill="#222"/>
<rect x="41" y="512.94" width="2.3" height="1.4" fill="#222"/>
<rect x="41" y="519.48" width="2.3" height="1.4" fill="#222"/>
<rect x="41" y="526.02" width="2.3" height="1.4" fill="#222"/>
<rect x="41" y="532.56" width="2.3" height="1.4" fill="#222"/>
<rect x="39" y="539.00" width="4.3" height="1.5" fill="#111"/>
<text transform="translate(38,539.30) rotate(-90)" font-size="9.4" text-anchor="middle" textLength="14.4" lengthAdjust="spacingAndGlyphs" fill="#111" font-weight="normal" stroke="#111" stroke-width="0.25">185</text>
<rect x="41" y="545.64" width="2.3" height="1.4" fill="#222"/>
<rect x="41" y="552.18" width="2.3" height="1.4" fill="#222"/>
<rect x="41" y="558.72" width="2.3" height="1.4" fill="#222"/>
<rect x="41" y="565.26" width="2.3" height="1.4" fill="#222"/>
<rect x="39.5" y="571.80" width="3.8" height="1.4" fill="#222"/>
<rect x="41" y="578.34" width="2.3" height="1.4" fill="#222"/>
<rect x="41" y="584.88" width="2.3" height="1.4" fill="#222"/>
<rect x="41" y="591.42" width="2.3" height="1.4" fill="#222"/>
<rect x="41" y="597.96" width="2.3" height="1.4" fill="#222"/>
<rect x="39" y="604.40" width="4.3" height="1.5" fill="#111"/>
<text transform="translate(38,604.70) rotate(-90)" font-size="9.4" text-anchor="middle" textLength="14.4" lengthAdjust="spacingAndGlyphs" fill="#111" font-weight="normal" stroke="#111" stroke-width="0.25">180</text>
<rect x="41" y="611.04" width="2.3" height="1.4" fill="#222"/>
<rect x="41" y="617.58" width="2.3" height="1.4" fill="#222"/>
<rect x="41" y="624.12" width="2.3" height="1.4" fill="#222"/>
<rect x="41" y="630.66" width="2.3" height="1.4" fill="#222"/>
<rect x="39.5" y="637.20" width="3.8" height="1.4" fill="#222"/>
<rect x="41" y="643.74" width="2.3" height="1.4" fill="#222"/>
<rect x="41" y="650.28" width="2.3" height="1.4" fill="#222"/>
<rect x="41" y="656.82" width="2.3" height="1.4" fill="#222"/>
<rect x="41" y="663.36" width="2.3" height="1.4" fill="#222"/>
</svg>
<svg style="left:0;top:0" width="1000" height="664">
<g fill="none" stroke="#1c1c1c" stroke-width="2.6" stroke-linejoin="miter">
<rect x="54.3" y="310.5" width="47.5" height="360" fill="#0087df" stroke="#0c1620"/>
<polyline points="101.6,670 101.6,273.8 153.8,277.2"/>
<polyline points="154,670 154,230 205.6,238"/>
<polyline points="205.6,670 205.6,191.6 658.2,310 1005,219"/>
<line x1="658.2" y1="310" x2="658.2" y2="670"/>
<rect x="591.3" y="366.3" width="28" height="35.3"/>
<rect x="696.4" y="366.3" width="28" height="35.3"/>
<rect x="591.3" y="436.3" width="28" height="35.3"/>
<rect x="696.4" y="436.3" width="28" height="35.3"/>
</g>
<path d="M596.75,391.2 A60.5,30.4 0 0 1 717.75,391.2 L704.7,391.2 A47.45,17.2 0 0 0 609.8,391.2 Z" fill="#201d1b"/>
<path d="M596.75,461.2 A60.5,30.4 0 0 1 717.75,461.2 L704.7,461.2 A47.45,17.2 0 0 0 609.8,461.2 Z" fill="#201d1b"/>
<g fill="#000">
<rect x="579" y="425.3" width="6.6" height="6.4"/><rect x="579" y="450.2" width="6.6" height="6.4"/><rect x="579" y="475" width="6.6" height="6.4"/>
<rect x="727.5" y="425.3" width="6.6" height="6.4"/><rect x="727.5" y="450.2" width="6.6" height="6.4"/><rect x="727.5" y="475" width="6.6" height="6.4"/>
<rect x="653" y="425" width="3.5" height="6.6"/><rect x="653" y="475" width="3.5" height="6.6"/>
</g>
<rect x="656.7" y="425" width="2.8" height="6.6" fill="#fff"/><rect x="656.7" y="475" width="2.8" height="6.6" fill="#fff"/>
<path d="M653.5,450.5 L659,456.5 M659,450.5 L653.5,456.5" stroke="#000" stroke-width="1.5"/>
<rect x="657" y="451" width="2.5" height="5" fill="#fff"/>
<rect x="588.3" y="434" width="4" height="4" fill="#000"/><rect x="589.5" y="435.2" width="1.6" height="1.6" fill="#fff"/>
<rect x="693.8" y="434" width="4" height="4" fill="#000"/><rect x="695" y="435.2" width="1.6" height="1.6" fill="#fff"/>
<rect x="600.9" y="460" width="4.3" height="3.8" fill="#000"/><ellipse cx="603.05" cy="461.9" rx="1.1" ry="0.8" fill="#fff"/>
<g fill="#000"><rect x="781" y="105" width="1.4" height="3"/><rect x="781" y="110" width="1.4" height="4"/><rect x="781" y="117" width="1.4" height="3.5"/>
<rect x="26.8" y="438.7" width="3.2" height="1.4"/><rect x="32.8" y="438.7" width="3.2" height="1.4"/><rect x="39" y="438.7" width="3" height="1.4"/></g>
</svg>
<div class="abs" style="left:810.3px;top:441.5px;font-size:16.3px;line-height:18px;color:#8f4858;white-space:nowrap">复制时按<span style="letter-spacing:-0.7px">Ctrl</span>键</div>
</body></html>
